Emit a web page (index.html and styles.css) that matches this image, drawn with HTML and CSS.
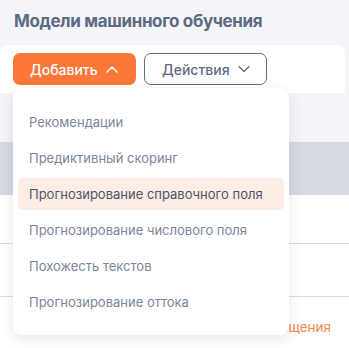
FILE: index.html
```html
<!DOCTYPE html>
<html lang="ru">
<head>
<meta charset="utf-8">
<title>Модели машинного обучения</title>
<link rel="stylesheet" href="styles.css">
</head>
<body>
<div class="page">
  <h1 class="title">Модели машинного обучения</h1>
  <div class="toolbar">
    <div class="add-wrap">
      <button class="btn btn-primary">Добавить
        <svg class="chev" width="12" height="8" viewBox="0 0 12 8"><path d="M1 7 L6 2 L11 7" fill="none" stroke="currentColor" stroke-width="1.5" stroke-linecap="round" stroke-linejoin="round"/></svg>
      </button>
      <div class="menu">
        <div class="menu-item">Рекомендации</div>
        <div class="menu-item">Предиктивный скоринг</div>
        <div class="menu-item active">Прогнозирование справочного поля</div>
        <div class="menu-item">Прогнозирование числового поля</div>
        <div class="menu-item">Похожесть текстов</div>
        <div class="menu-item">Прогнозирование оттока</div>
      </div>
    </div>
    <button class="btn btn-outline">Действия
      <svg class="chev" width="12" height="8" viewBox="0 0 12 8"><path d="M1 1.5 L6 6.5 L11 1.5" fill="none" stroke="currentColor" stroke-width="1.3" stroke-linecap="round" stroke-linejoin="round"/></svg>
    </button>
  </div>
  <div class="table">
    <div class="thead"></div>
    <div class="row"></div>
    <div class="row"></div>
    <div class="row last"><span class="link">Настройки размещения</span></div>
  </div>
</div>
</body>
</html>
```
FILE: styles.css
```css
* { box-sizing: border-box; }
html, body { margin: 0; padding: 0; }
body {
  background: #f4f5f9;
  font-family: Inter, "Noto Sans", sans-serif;
  width: 349px;
  height: 348px;
  overflow: hidden;
}
.page { display: flex; flex-direction: column; }
.title {
  margin: 0;
  padding: 11px 14px 0 14px;
  height: 45px;
  font-size: 17px;
  font-weight: 700;
  color: #5d6a80;
  letter-spacing: -0.35px;
}
.toolbar {
  width: 345px;
  height: 48px;
  background: #fff;
  border-radius: 8px 8px 0 0;
  padding: 8px 13px 0 13px;
  display: flex;
  gap: 8px;
  position: relative;
  z-index: 2;
}
.add-wrap { position: relative; }
.btn {
  height: 32px;
  width: 123px;
  border-radius: 7px;
  font-family: Inter, "Noto Sans", sans-serif;
  font-size: 14px;
  font-weight: 500;
  display: flex;
  align-items: center;
  padding: 0 0 0 17px;
  gap: 8px;
  cursor: pointer;
}
.btn-primary {
  background: #fb773a;
  color: #fff;
  border: none;
}
.btn-outline {
  background: #fff;
  color: #5f6b84;
  border: 1px solid #5f6d8a;
  padding-left: 17px;
  gap: 8px;
}
.chev { flex: none; }
.menu {
  position: absolute;
  left: 0;
  top: 35px;
  width: 276px;
  height: 247px;
  background: #fff;
  border-radius: 9px;
  box-shadow: 0 4px 14px rgba(60, 70, 100, 0.13);
  padding: 18px 5px 0 5px;
  display: flex;
  flex-direction: column;
  gap: 4px;
}
.menu-item {
  height: 32px;
  line-height: 32px;
  padding-left: 11px;
  font-size: 13px;
  color: #7a859b;
  border-radius: 5px;
  white-space: nowrap;
}
.menu-item.active {
  background: #fdede4;
  color: #4c5568;
}
.table {
  margin-top: 49px;
  background: #fff;
  display: flex;
  flex-direction: column;
}
.thead { height: 53px; background: #d6d9e2; }
.row {
  height: 49px;
  border-bottom: 1px solid #d9dbe7;
}
.row + .row { height: 53px; }
.row.last {
  border-bottom: none;
  height: 60px;
  display: flex;
  justify-content: flex-end;
  align-items: center;
  padding: 0 18px 0 0;
}
.link {
  color: #f98548;
  font-size: 13.5px;
}
```
